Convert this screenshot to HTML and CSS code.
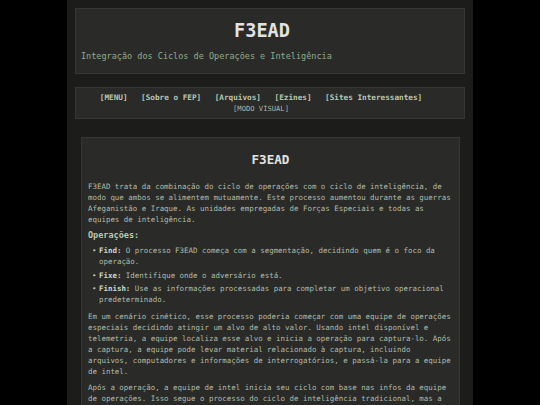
FILE: index.html
```html
<!DOCTYPE html>
<html lang="pt">
<head>
<meta charset="utf-8">
<title>F3EAD</title>
<link rel="stylesheet" href="styles.css">
</head>
<body>
<div class="page">
  <header class="box header">
    <h1 class="site-title">F3EAD</h1>
    <p class="tagline">Integração dos Ciclos de Operações e Inteligência</p>
  </header>
  <nav class="box nav">
    <div class="nav-row">
      <a href="#">[MENU]</a>
      <a href="#">[Sobre o FEP]</a>
      <a href="#">[Arquivos]</a>
      <a href="#">[Ezines]</a>
      <a href="#">[Sites Interessantes]</a>
    </div>
    <div class="nav-sub"><a href="#">[MODO VISUAL]</a></div>
  </nav>
  <main class="box article">
    <h2 class="article-title">F3EAD</h2>
    <p>F3EAD trata da combinação do ciclo de operações com o ciclo de inteligência, de modo que ambos se alimentem mutuamente. Este processo aumentou durante as guerras Afeganistão e Iraque. As unidades empregadas de Forças Especiais e todas as equipes de inteligência.</p>
    <h3 class="section-title">Operações:</h3>
    <ul class="list">
      <li><strong>Find:</strong> O processo F3EAD começa com a segmentação, decidindo quem é o foco da operação.</li>
      <li><strong>Fixe:</strong> Identifique onde o adversário está.</li>
      <li><strong>Finish:</strong> Use as informações processadas para completar um objetivo operacional predeterminado.</li>
    </ul>
    <p>Em um cenário cinético, esse processo poderia começar com uma equipe de operações especiais decidindo atingir um alvo de alto valor. Usando intel disponível e telemetria, a equipe localiza esse alvo e inicia a operação para captura-lo. Após a captura, a equipe pode levar material relacionado à captura, incluindo arquivos, computadores e informações de interrogatórios, e passá-la para a equipe de intel.</p>
    <p>Após a operação, a equipe de intel inicia seu ciclo com base nas infos da equipe de operações. Isso segue o processo do ciclo de inteligência tradicional, mas a alimentação e exploração rápida da informação ocorre para que as equipes continuem operando.</p>
  </main>
</div>
</body>
</html>
```

FILE: styles.css
```css
html, body {
  margin: 0;
  padding: 0;
  background: #000;
}
body {
  font-family: "DejaVu Sans Mono", "Liberation Mono", monospace;
  color: #aebaa8;
  overflow: hidden;
}
.page {
  width: 390px;
  margin: 0 auto;
  padding: 8px 8px 0;
  background: #1c1d1b;
  min-height: 405px;
  box-sizing: content-box;
}
.box {
  background: #2a2b29;
  border: 1px solid #363735;
}
.header {
  padding: 11px 21px 11px 5px;
}
.site-title {
  margin: 0;
  text-align: center;
  font-size: 18.6px;
  line-height: 22px;
  font-weight: bold;
  color: #e2e2e0;
}
.tagline {
  margin: 9px 0 0;
  font-size: 8.5px;
  line-height: 11px;
  color: #8fab8b;
}
.nav {
  margin-top: 13px;
  padding: 4px 22px 3px 4px;
  text-align: center;
}
.nav a {
  color: #b9c6b2;
  text-decoration: none;
}
.nav-row {
  display: flex;
  justify-content: center;
  gap: 13.5px;
  font-size: 7.7px;
  line-height: 11px;
  font-weight: bold;
}
.nav-sub {
  font-size: 7.15px;
  line-height: 12px;
}
.nav-sub a {
  color: #a9b5a3;
}
.article {
  margin: 18px 5px 0 6px;
  padding: 14px 6px 10px;
  font-size: 7.45px;
  line-height: 11px;
}
.article-title {
  margin: 0 0 14px;
  text-align: center;
  font-size: 12.6px;
  line-height: 15px;
  font-weight: bold;
  color: #e2e2e0;
}
.article p {
  margin: 0 0 5px;
}
.section-title {
  margin: 0 0 4px;
  font-size: 8.5px;
  line-height: 11px;
  font-weight: bold;
  color: #b9c6b2;
}
.list {
  margin: 0 0 6px;
  padding: 0 0 0 11px;
  list-style: none;
}
.list li {
  position: relative;
  margin-bottom: 2.5px;
}
.list li::before {
  content: "•";
  position: absolute;
  left: -7px;
  top: 0;
  color: #b9c6b2;
}
.list strong {
  color: #cdd6c8;
}
```
